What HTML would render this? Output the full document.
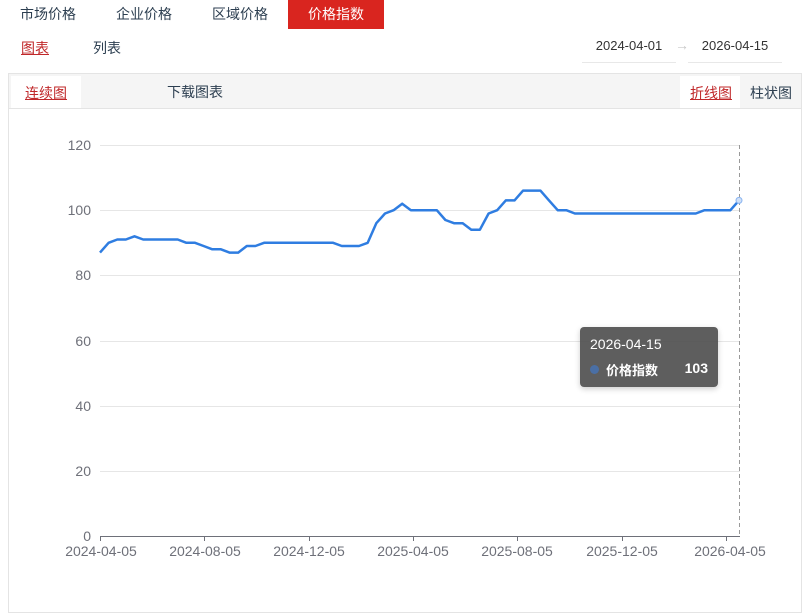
<!DOCTYPE html>
<html><head><meta charset="utf-8"><style>
*{margin:0;padding:0;box-sizing:border-box}
body{width:809px;height:600px;background:#fff;font-family:"Liberation Sans","Noto Sans CJK SC",sans-serif;position:relative;overflow:hidden;color:#333}
.a{position:absolute;white-space:nowrap}
.tab{top:0;height:29px;line-height:29px;font-size:14px;color:#2c3e50;text-align:center}
.u{text-decoration:underline;color:#c0282a}
</style></head><body>
<div class="a tab" style="left:8px;width:80px">市场价格</div>
<div class="a tab" style="left:104px;width:80px">企业价格</div>
<div class="a tab" style="left:200px;width:80px">区域价格</div>
<div class="a tab" style="left:288px;width:96px;background:#d9251f;color:#fff">价格指数</div>
<div class="a u" style="left:21px;top:38px;font-size:14px">图表</div>
<div class="a" style="left:93px;top:38px;font-size:14px;color:#2c3e50">列表</div>
<div class="a" style="left:582px;top:38px;width:94px;height:25px;border-bottom:1px solid #e8e8e8;font-size:13px;text-align:center;line-height:16px">2024-04-01</div>
<div class="a" style="left:675px;top:37px;font-size:14px;color:#c8c8c8">→</div>
<div class="a" style="left:688px;top:38px;width:94px;height:25px;border-bottom:1px solid #e8e8e8;font-size:13px;text-align:center;line-height:16px">2026-04-15</div>
<div class="a" style="left:8px;top:73px;width:794px;height:540px;border:1px solid #e4e4e4"></div>
<div class="a" style="left:9px;top:74px;width:792px;height:35px;background:#f5f5f5;border-bottom:1px solid #e4e4e4"></div>
<div class="a" style="left:11px;top:76px;width:70px;height:32px;background:#fff"></div>
<div class="a u" style="left:25px;top:83px;font-size:14px">连续图</div>
<div class="a" style="left:167px;top:82px;font-size:14px;color:#2c3e50">下载图表</div>
<div class="a" style="left:680px;top:76px;width:60px;height:32px;background:#fff"></div>
<div class="a u" style="left:690px;top:83px;font-size:14px">折线图</div>
<div class="a" style="left:750px;top:83px;font-size:14px;color:#2c3e50">柱状图</div>
<svg class="a" style="left:0;top:0" width="809" height="600">
<g stroke="#e6e6e6" stroke-width="1">
<line x1="100" x2="740" y1="145.5" y2="145.5"/><line x1="100" x2="740" y1="210.5" y2="210.5"/><line x1="100" x2="740" y1="275.5" y2="275.5"/><line x1="100" x2="740" y1="341.5" y2="341.5"/><line x1="100" x2="740" y1="406.5" y2="406.5"/><line x1="100" x2="740" y1="471.5" y2="471.5"/>
</g>
<line x1="100" x2="740" y1="536.5" y2="536.5" stroke="#6e7079"/>
<g stroke="#6e7079"><line x1="100.5" x2="100.5" y1="536" y2="541"/><line x1="204.5" x2="204.5" y1="536" y2="541"/><line x1="309.5" x2="309.5" y1="536" y2="541"/><line x1="413.5" x2="413.5" y1="536" y2="541"/><line x1="517.5" x2="517.5" y1="536" y2="541"/><line x1="622.5" x2="622.5" y1="536" y2="541"/><line x1="726.5" x2="726.5" y1="536" y2="541"/></g>
<line x1="739.5" x2="739.5" y1="145" y2="536" stroke="#999" stroke-dasharray="4,3"/>
<g font-size="14" fill="#6e7079" text-anchor="end" font-family="Liberation Sans,sans-serif">
<text x="91" y="150">120</text><text x="91" y="215">100</text><text x="91" y="280">80</text><text x="91" y="346">60</text><text x="91" y="411">40</text><text x="91" y="476">20</text><text x="91" y="541">0</text></g>
<g font-size="14" fill="#6e7079" text-anchor="middle" font-family="Liberation Sans,sans-serif">
<text x="101" y="556">2024-04-05</text><text x="205" y="556">2024-08-05</text><text x="309" y="556">2024-12-05</text><text x="413" y="556">2025-04-05</text><text x="517" y="556">2025-08-05</text><text x="622" y="556">2025-12-05</text><text x="730" y="556">2026-04-05</text></g>
<polyline fill="none" stroke="#2f7de1" stroke-width="2.5" stroke-linejoin="round" points="100,252.6 108.6,242.8 117.3,239.5 125.9,239.5 134.5,236.3 143.2,239.5 151.8,239.5 160.4,239.5 169.1,239.5 177.7,239.5 186.4,242.8 195,242.8 203.6,246 212.3,249.3 220.9,249.3 229.5,252.6 238.2,252.6 246.8,246 255.4,246 264.1,242.8 272.7,242.8 281.3,242.8 290,242.8 298.6,242.8 307.2,242.8 315.9,242.8 324.5,242.8 333.1,242.8 341.8,246 350.4,246 359,246 367.7,242.8 376.3,223.2 385,213.5 393.6,210.2 402.2,203.7 410.9,210.2 419.5,210.2 428.1,210.2 436.8,210.2 445.4,220 454,223.2 462.7,223.2 471.3,229.7 479.9,229.7 488.6,213.5 497.2,210.2 505.8,200.4 514.5,200.4 523.1,190.6 531.8,190.6 540.4,190.6 549,200.4 557.7,210.2 566.3,210.2 574.9,213.5 695.8,213.5 704.5,210.2 730.4,210.2 739,200.4"/>
<circle cx="739" cy="200.4" r="3" fill="#cfe0f8" stroke="#8ab4f0"/>
</svg>
<div class="a" style="left:580px;top:327px;width:138px;height:60px;background:rgba(80,80,80,.92);border-radius:4px;box-shadow:0 2px 6px rgba(0,0,0,.2);color:#fff">
<div class="a" style="left:10px;top:9px;font-size:14px">2026-04-15</div>
<div class="a" style="left:10px;top:38px;width:9px;height:9px;border-radius:50%;background:#4a6fa5"></div>
<div class="a" style="left:26px;top:33px;font-size:13px;font-weight:bold">价格指数</div>
<div class="a" style="right:10px;top:33px;font-size:14px;font-weight:bold">103</div>
</div>
</body></html>
